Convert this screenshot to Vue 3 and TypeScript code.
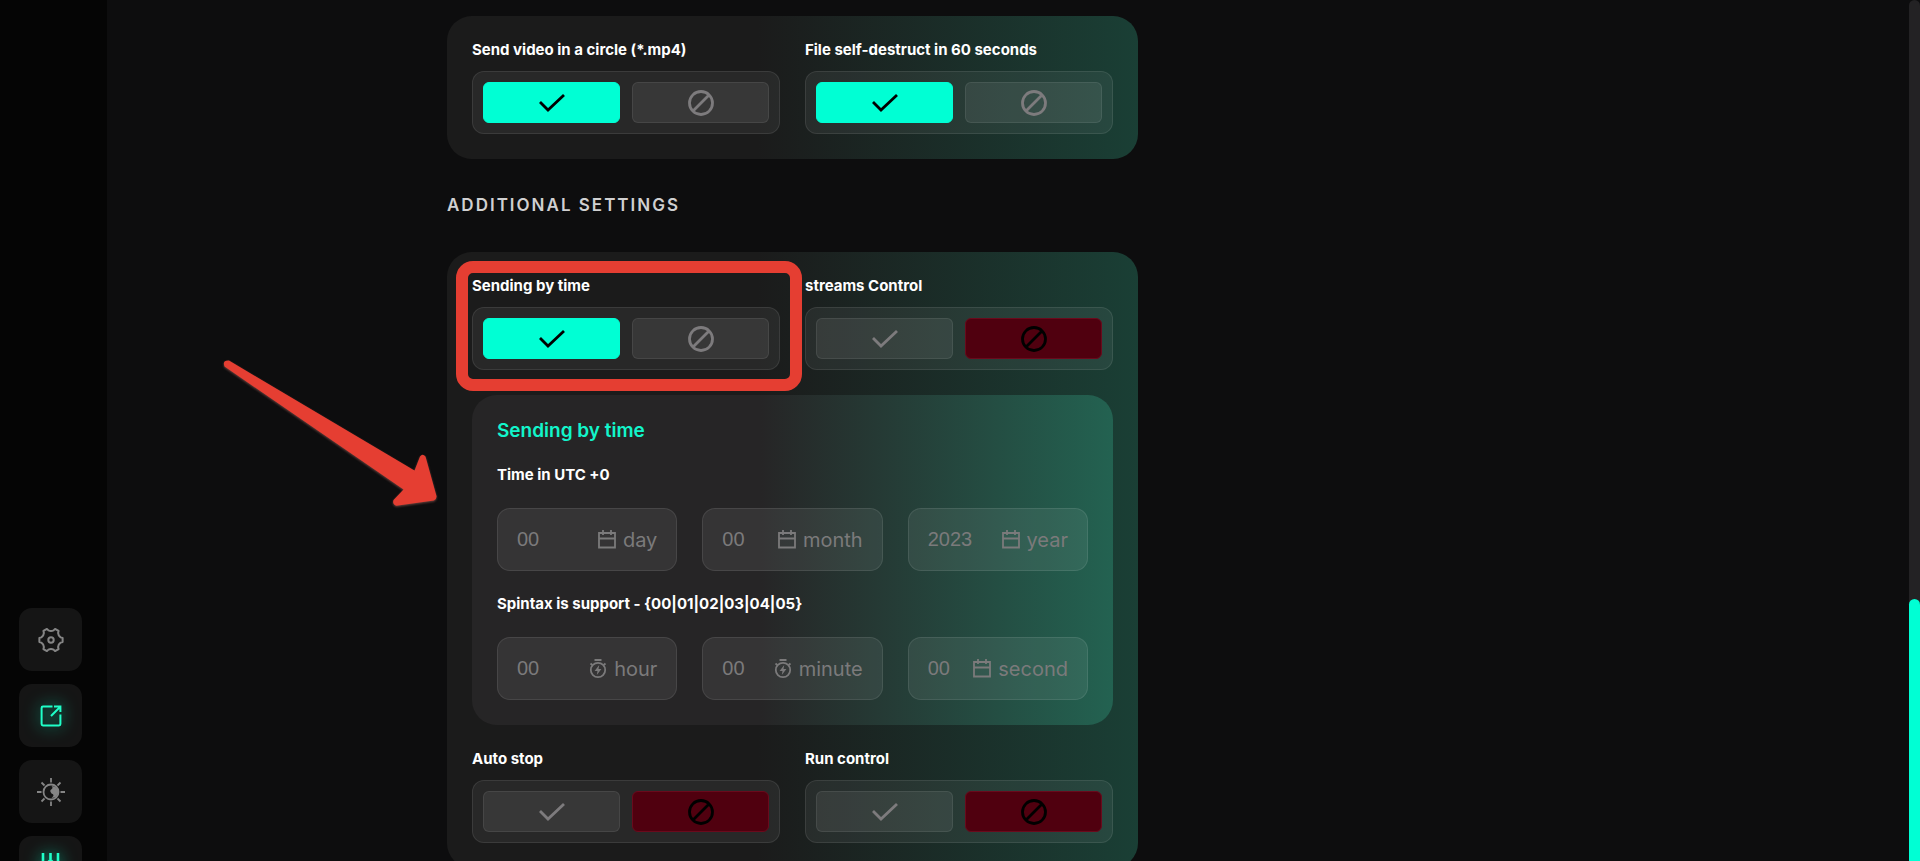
<script setup lang="ts">
import { reactive, ref } from 'vue'

interface Toggle {
  id: string
  label: string
  on: boolean
  marked?: boolean
}

interface TimeField {
  id: string
  unit: string
  placeholder: string
  icon: 'calendar' | 'timer'
}

const fileToggles = reactive<Toggle[]>([
  { id: 'circle', label: 'Send video in a circle (*.mp4)', on: true },
  { id: 'destruct', label: 'File self-destruct in 60 seconds', on: true },
])

const scheduleToggles = reactive<Toggle[]>([
  { id: 'schedule', label: 'Sending by time', on: true, marked: true },
  { id: 'streams', label: 'streams Control', on: false },
])

const runToggles = reactive<Toggle[]>([
  { id: 'autostop', label: 'Auto stop', on: false },
  { id: 'run', label: 'Run control', on: false },
])

const dateFields: TimeField[] = [
  { id: 'day', unit: 'day', placeholder: '00', icon: 'calendar' },
  { id: 'month', unit: 'month', placeholder: '00', icon: 'calendar' },
  { id: 'year', unit: 'year', placeholder: '2023', icon: 'calendar' },
]

const clockFields: TimeField[] = [
  { id: 'hour', unit: 'hour', placeholder: '00', icon: 'timer' },
  { id: 'minute', unit: 'minute', placeholder: '00', icon: 'timer' },
  { id: 'second', unit: 'second', placeholder: '00', icon: 'calendar' },
]

const values = reactive<Record<string, string>>({})
const groups = [
  { title: 'Time in UTC +0', fields: dateFields },
  { title: 'Spintax is support - {00|01|02|03|04|05}', fields: clockFields },
]

const activeNav = ref('export')

const nav = [
  { id: 'settings', label: 'Settings', lit: false },
  { id: 'export', label: 'Open', lit: true },
  { id: 'theme', label: 'Theme', lit: false },
  { id: 'tools', label: 'Tools', lit: true },
]

const checkPath = 'M2 9l8 8L26 2'
const banPath = 'M13 1.5a11.5 11.5 0 1 0 0 23a11.5 11.5 0 1 0 0-23M5 21L21 5'

function polar(angle: number, radius: number): string {
  const a = (angle * Math.PI) / 180
  return `${(14 + radius * Math.cos(a)).toFixed(2)} ${(14 + radius * Math.sin(a)).toFixed(2)}`
}

// Six-lobed gear outline
let gearPath = ''
for (let k = 0; k < 6; k++) {
  const a = k * 60
  gearPath += `${k === 0 ? 'M' : 'L'}${polar(a - 10, 11.8)} L${polar(a + 10, 11.8)} L${polar(a + 15, 10)} Q${polar(a + 30, 8.4)} ${polar(a + 45, 10)} `
}
gearPath += 'Z'
</script>

<template>
  <div class="shell">
    <nav class="sidebar" aria-label="Main">
      <button
        v-for="item in nav"
        :key="item.id"
        type="button"
        class="nav-btn"
        :class="{ lit: item.lit }"
        :aria-label="item.label"
        :aria-current="activeNav === item.id ? 'page' : undefined"
        @click="activeNav = item.id"
      >
        <svg width="28" height="28" viewBox="0 0 28 28" fill="none" stroke="currentColor" stroke-width="2">
          <template v-if="item.id === 'settings'">
            <path :d="gearPath" stroke-linejoin="round" />
            <circle cx="14" cy="14" r="2.7" />
          </template>
          <template v-else-if="item.id === 'export'">
            <path d="M15.5 4.6H6A1.4 1.4 0 0 0 4.600 6v16A1.4 1.4 0 0 0 6 23.4h16a1.4 1.4 0 0 0 1.400-1.400v-9.500M17 4.600h6.400V10M23 5l-9 9" />
          </template>
          <template v-else-if="item.id === 'theme'">
            <circle cx="14" cy="14" r="7.5" stroke-width="1.8" />
            <path d="M14.500 8.300a5.800 5.800 0 1 1 0 11.400q4-2.700 0-4.200q-2.500-3 0-4.200q2-1.500 0-3z" fill="currentColor" stroke="none" />
            <path
              d="M14 0v4.500M14 23.500V28M0 14h4.500M23.500 14H28M4.500 4.500l3 3M20.500 20.500l3 3M4.500 23.500l3-3M20.500 7.500l3-3"
              stroke-width="1.800"
            />
          </template>
          <template v-else>
            <path d="M6 -1v26M21 -1v26M13.500 -1v6M8.500 15q0-5 5-9q5 4 5 9" stroke-width="2.600" />
          </template>
        </svg>
      </button>
    </nav>

    <main class="content">
      <section class="card">
        <div class="pair">
          <div v-for="t in fileToggles" :key="t.id" class="field" role="group" :aria-labelledby="'l-' + t.id">
            <span :id="'l-' + t.id" class="label">{{ t.label }}</span>
            <div class="switch">
              <button type="button" class="opt" :class="{ yes: t.on }" aria-label="On" :aria-pressed="t.on" @click="t.on = true">
                <svg width="28" height="20" viewBox="0 0 28 20"><path :d="checkPath" /></svg>
              </button>
              <button type="button" class="opt" :class="{ no: !t.on }" aria-label="Off" :aria-pressed="!t.on" @click="t.on = false">
                <svg width="26" height="26" viewBox="0 0 26 26"><path :d="banPath" /></svg>
              </button>
            </div>
          </div>
        </div>
      </section>

      <h2 class="heading">ADDITIONAL SETTINGS</h2>

      <section class="card">
        <div class="pair">
          <div v-for="t in scheduleToggles" :key="t.id" class="field" role="group" :aria-labelledby="'l-' + t.id">
            <span :id="'l-' + t.id" class="label">{{ t.label }}</span>
            <div class="switch">
              <button type="button" class="opt" :class="{ yes: t.on }" aria-label="On" :aria-pressed="t.on" @click="t.on = true">
                <svg width="28" height="20" viewBox="0 0 28 20"><path :d="checkPath" /></svg>
              </button>
              <button type="button" class="opt" :class="{ no: !t.on }" aria-label="Off" :aria-pressed="!t.on" @click="t.on = false">
                <svg width="26" height="26" viewBox="0 0 26 26"><path :d="banPath" /></svg>
              </button>
            </div>
            <div v-if="t.marked" class="marker" aria-hidden="true"></div>
          </div>
        </div>

        <div class="panel">
          <h3 class="panel-title">Sending by time</h3>
          <template v-for="g in groups" :key="g.title">
            <span class="label">{{ g.title }}</span>
            <div class="triple">
              <label v-for="f in g.fields" :key="f.id" class="time">
                <input v-model="values[f.id]" type="text" :placeholder="f.placeholder" />
                <svg width="20" height="20" viewBox="0 0 20 20" fill="none" stroke="currentColor" stroke-width="1.800">
                  <path v-if="f.icon === 'calendar'" d="M2 3h16v14.500H2zM2 8.500h16M6 0v5M14 0v5" />
                  <template v-else>
                    <circle cx="10" cy="11" r="7.200" />
                    <path d="M6.500 1h7M2.500 4.500l1.800 1.500M17.500 4.500l-1.800 1.500" />
                    <path d="M11.200 6L6.600 12h2.900L8.800 16l4.600-6h-2.900z" fill="currentColor" stroke="none" />
                  </template>
                </svg>
                <span class="unit">{{ f.unit }}</span>
              </label>
            </div>
          </template>
        </div>

        <div class="pair">
          <div v-for="t in runToggles" :key="t.id" class="field" role="group" :aria-labelledby="'l-' + t.id">
            <span :id="'l-' + t.id" class="label">{{ t.label }}</span>
            <div class="switch">
              <button type="button" class="opt" :class="{ yes: t.on }" aria-label="On" :aria-pressed="t.on" @click="t.on = true">
                <svg width="28" height="20" viewBox="0 0 28 20"><path :d="checkPath" /></svg>
              </button>
              <button type="button" class="opt" :class="{ no: !t.on }" aria-label="Off" :aria-pressed="!t.on" @click="t.on = false">
                <svg width="26" height="26" viewBox="0 0 26 26"><path :d="banPath" /></svg>
              </button>
            </div>
          </div>
        </div>

        <svg class="arrow" width="224" height="160" viewBox="0 0 224 160" aria-hidden="true">
          <path
            d="M9 8.500L194.500 118.500L200 104.500Q202.500 101 205.500 104.500L216.500 144Q217 147 214 148.500L176.500 153.800Q172 152.500 173.500 148L183.500 137.500L4.500 14.500Q2 8 9 8.500Z"
          />
        </svg>
      </section>
    </main>

    <div class="rail"><div class="thumb"></div></div>
  </div>
</template>

<style>
body {
  margin: 0;
  background: #0d0d0e;
}
</style>

<style scoped>
.shell {
  display: flex;
  height: 100vh;
  overflow: hidden;
  background: #0d0d0e;
  color: #fff;
  font-family: Inter, "Liberation Sans", sans-serif;
}

.sidebar {
  box-sizing: border-box;
  flex: none;
  width: 107px;
  padding-left: 19px;
  background: #050505;
  display: flex;
  flex-direction: column;
  justify-content: flex-end;
  gap: 13px;
  margin-bottom: -38px;
}

.nav-btn {
  flex: none;
  width: 63px;
  height: 63px;
  padding: 0;
  border: 0;
  border-radius: 13px;
  background: #151515;
  color: #858585;
  display: flex;
  align-items: center;
  justify-content: center;
}

.nav-btn svg {
  overflow: visible;
}

.nav-btn.lit {
  color: #1fffc8;
}

.nav-btn.lit svg {
  filter: drop-shadow(0 0 8px rgba(0, 255, 200, 0.8));
}

.content {
  flex: 1;
  min-width: 0;
  padding: 16px 25px 0 340px;
}

.card {
  position: relative;
  box-sizing: border-box;
  max-width: 691px;
  padding: 25px;
  border-radius: 25px;
  background: linear-gradient(90deg, #1b1b1b 45%, #1a3f35 100%);
  display: flex;
  flex-direction: column;
  gap: 25px;
}

.pair {
  display: grid;
  grid-template-columns: 1fr 1fr;
  gap: 25px;
}

.field {
  position: relative;
  display: flex;
  flex-direction: column;
  gap: 12px;
}

.label {
  font-size: 15px;
  font-weight: 700;
  line-height: 18px;
  white-space: nowrap;
}

.switch {
  box-sizing: border-box;
  height: 63px;
  padding: 10px;
  border: 1px solid rgba(255, 255, 255, 0.09);
  border-radius: 12px;
  background: rgba(255, 255, 255, 0.06);
  display: grid;
  grid-template-columns: 1fr 1fr;
  gap: 12px;
}

.opt {
  padding: 0;
  border: 1px solid rgba(255, 255, 255, 0.08);
  border-radius: 6px;
  background: rgba(255, 255, 255, 0.07);
  color: #7d7b7d;
  display: flex;
  align-items: center;
  justify-content: center;
}

.opt svg {
  fill: none;
  stroke: currentColor;
  stroke-width: 2.8;
}

.opt.yes {
  background: #00ffd4;
  border-color: #00ffd4;
  color: #000;
}

.opt.no {
  background: #50000f;
  border-color: #6a0a1c;
  color: #000;
}

.heading {
  margin: 35px 0;
  font-size: 17px;
  font-weight: 600;
  line-height: 23px;
  letter-spacing: 2px;
  color: #d0d0d1;
}

.panel {
  padding: 25px;
  border-radius: 25px;
  background: linear-gradient(90deg, #262526 45%, #236251 100%);
  display: flex;
  flex-direction: column;
  gap: 24px;
}

.panel-title {
  margin: 0;
  font-size: 19px;
  font-weight: 600;
  line-height: 22px;
  color: #12f5cb;
}

.triple {
  display: grid;
  grid-template-columns: repeat(3, 1fr);
  gap: 25px;
}

.time {
  box-sizing: border-box;
  height: 63px;
  padding: 0 19px;
  border: 1px solid rgba(255, 255, 255, 0.09);
  border-radius: 13px;
  background: rgba(255, 255, 255, 0.07);
  color: #7b7a7b;
  display: flex;
  align-items: center;
}

.time svg {
  flex: none;
  margin-right: 6px;
}

.time input {
  flex: 1;
  width: 0;
  min-width: 0;
  padding: 0;
  border: 0;
  outline: 0;
  background: none;
  color: #fff;
  font: 20px "Liberation Sans", Arial, sans-serif;
}

.time input::placeholder {
  color: #7b7a7b;
  opacity: 1;
}

.unit {
  font-size: 20px;
  line-height: 24px;
}

.marker {
  position: absolute;
  inset: -16px -22px -21px -16px;
  border: 12px solid #e53e32;
  border-radius: 17px;
  pointer-events: none;
}

.arrow {
  position: absolute;
  left: -227px;
  top: 100px;
  fill: #e53e32;
  filter: drop-shadow(0 1px 1px rgba(200, 120, 110, 0.5));
  pointer-events: none;
}

.rail {
  flex: none;
  width: 11px;
  background: #232224;
  border-radius: 6px;
  display: flex;
  flex-direction: column;
  justify-content: flex-end;
}

.thumb {
  height: 262px;
  border-radius: 6px 6px 0 0;
  background: #00ffd4;
}
</style>
